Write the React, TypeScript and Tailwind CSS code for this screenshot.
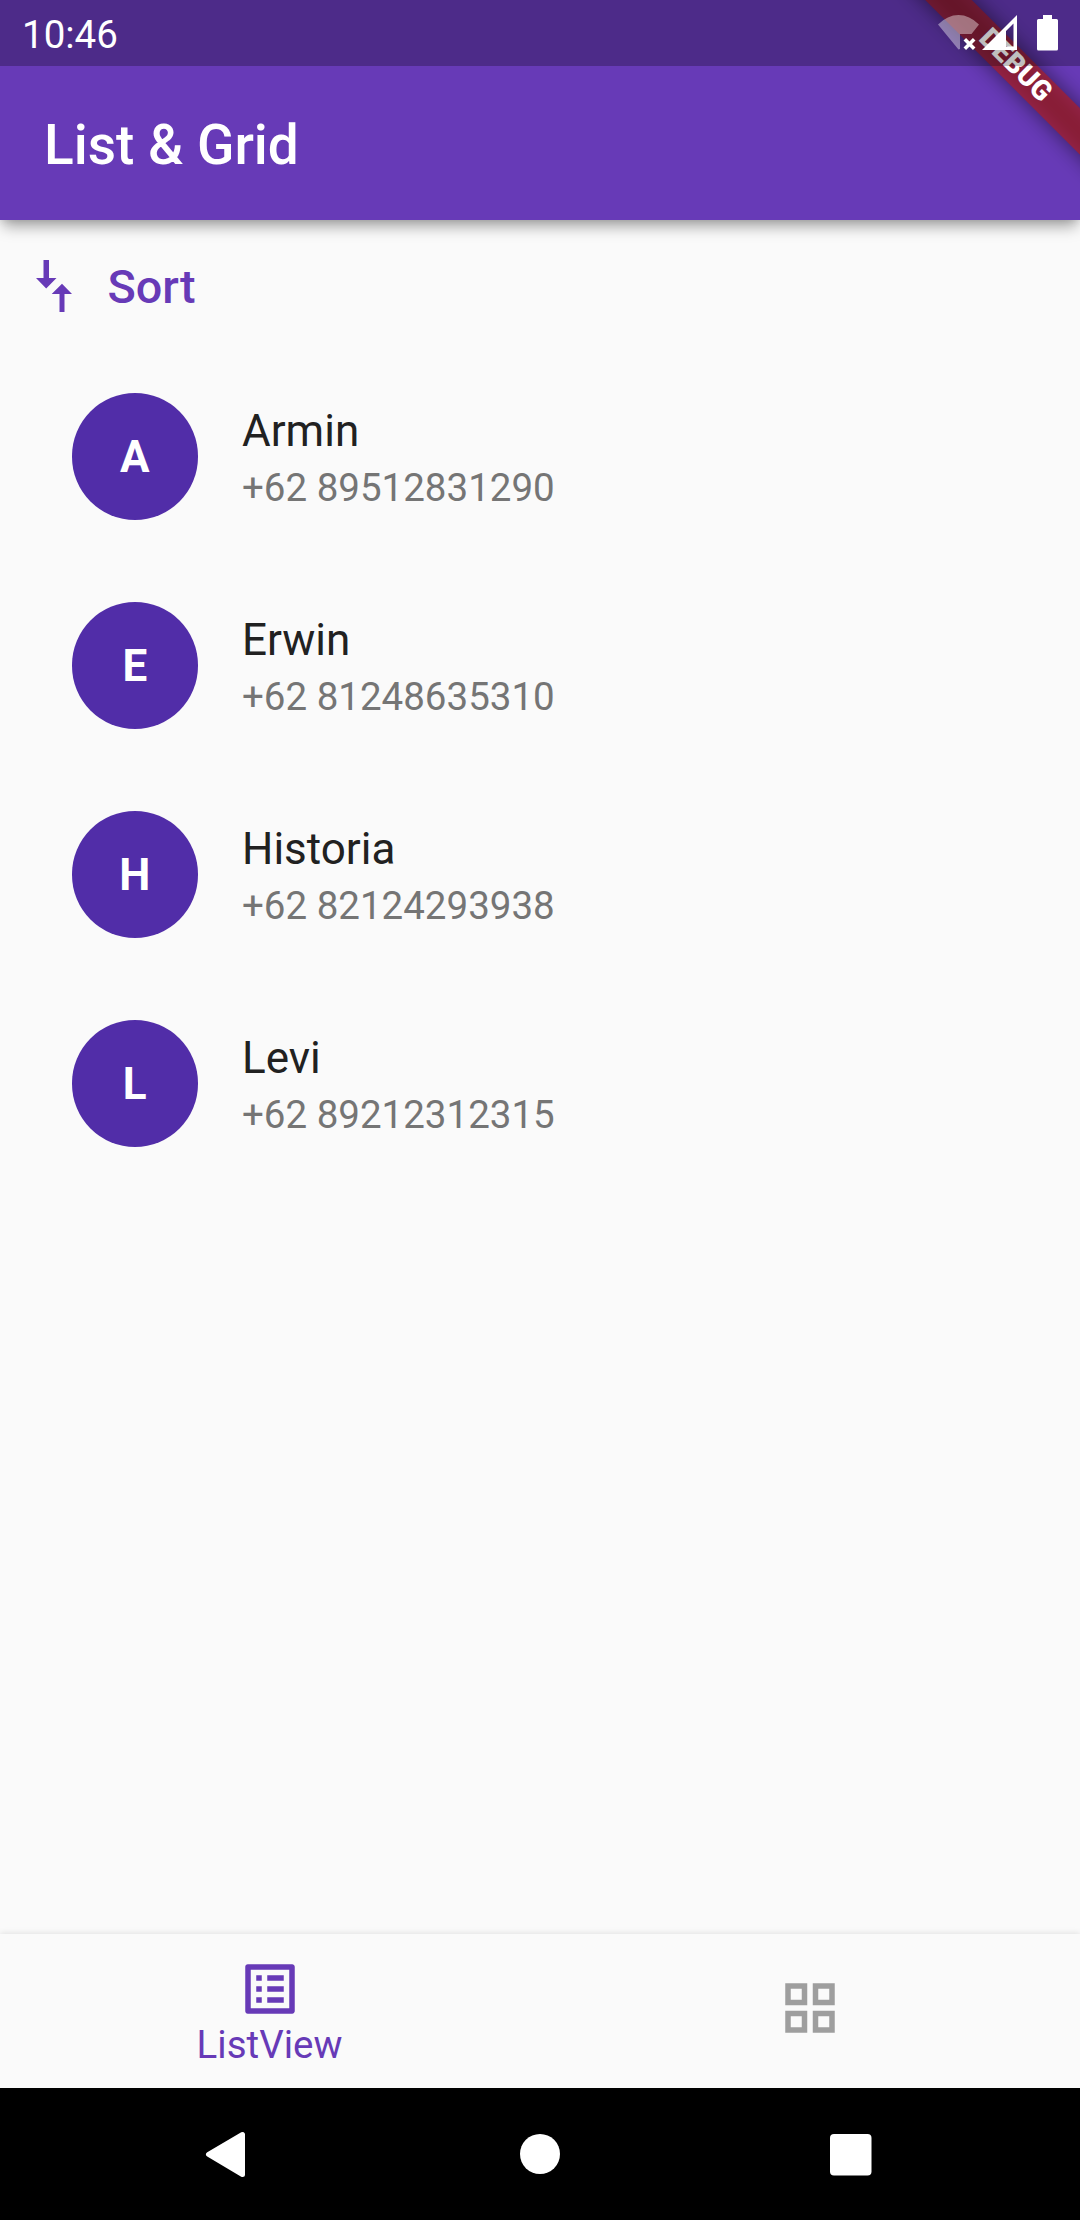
const contacts = [
  { name: "Armin", phone: "+62 89512831290" },
  { name: "Erwin", phone: "+62 81248635310" },
  { name: "Historia", phone: "+62 82124293938" },
  { name: "Levi", phone: "+62 89212312315" },
];

function DebugBanner() {
  return (
    <div className="pointer-events-none absolute top-0 right-0 h-[220px] w-[260px] overflow-hidden">
      <div className="absolute top-[49.25px] left-[44.25px] h-[33px] w-[300px] rotate-45 bg-black/50 blur-[10.5px]" />
      <div className="absolute top-[49.25px] left-[44.25px] flex h-[33px] w-[300px] rotate-45 items-center justify-center bg-[#b71c1c]/63 pb-[3px] pl-[2px] text-[28px] leading-[28px] font-black text-white">
        DEBUG
      </div>
    </div>
  );
}

function StatusIcons() {
  return (
    <svg className="h-[66px] w-[150px]" viewBox="930 0 150 66" fill="#fff">
      <path d="M938 24.5Q947.500 15 958.500 15Q969.500 15 979 24.500L971.500 34H960V49L958.500 49.500Z" fillOpacity=".4" />
      <path d="M964.800 39.300L974.200 48.700M974.200 39.300L964.800 48.700" stroke="#fff" strokeWidth="3.600" />
      <path fillRule="evenodd" d="M982 50L1017 15V50ZM1006 31V46.500H1013.500V23.500Z" />
      <path d="M1043 15H1052V19H1056.500Q1058 19 1058 20.500V49Q1058 50.500 1056.500 50.500H1038.500Q1037 50.500 1037 49V20.500Q1037 19 1038.500 19H1043Z" />
    </svg>
  );
}

function SortIcon() {
  return (
    <svg className="h-[52px] w-[36px]" viewBox="0 0 36 52" fill="#673ab7">
      <path d="M7.500 0H13V18H20.500L10.200 28.500L0 18H7.500Z" />
      <path d="M23.500 52H28.500V34H36L26 23.700L15.700 34H23.500Z" />
    </svg>
  );
}

export default function App() {
  return (
    <div className="flex h-[2220px] w-[1080px] flex-col overflow-hidden bg-[#fafafa] font-['Roboto',sans-serif]">
      <header className="relative z-10 h-[220px] shrink-0 bg-[#673ab7] shadow-[0_9px_14px_-3px_rgba(0,0,0,0.36),0_0_8px_rgba(0,0,0,0.1)]">
        <DebugBanner />
        <div className="relative flex h-[66px] justify-between bg-black/25 pl-[22px]">
          <span className="pt-[12px] text-[38.5px] leading-[46px] text-white">10:46</span>
          <StatusIcons />
        </div>
        <h1 className="pt-[47px] pl-[44px] text-[55px] leading-[64px] font-medium text-white">List &amp; Grid</h1>
      </header>

      <main className="flex-1">
        <button className="flex h-[132px] items-center pl-[35.5px] text-[#673ab7]">
          <SortIcon />
          <span className="pt-[2px] pl-[36px] text-[46.75px] leading-[54px] font-medium">Sort</span>
        </button>
        <ul>
          {contacts.map((c) => (
            <li key={c.name} className="flex h-[209px] items-center pl-[71.500px]">
              <div className="flex h-[126.5px] w-[126.5px] items-center justify-center rounded-full bg-[#512da8] pt-px text-[44px] leading-[52px] font-bold text-white">
                {c.name[0]}
              </div>
              <div className="pt-[3px] pl-[44px]">
                <p className="text-[44px] leading-[52px] text-[#212121]">{c.name}</p>
                <p className="pt-[8px] text-[38.5px] leading-[46px] text-[#757575]">{c.phone}</p>
              </div>
            </li>
          ))}
        </ul>
      </main>

      <nav className="grid h-[154px] shrink-0 grid-cols-2 bg-[#fafafa] shadow-[0_-1px_6px_rgba(0,0,0,0.1)]">
        <div className="flex flex-col items-center pt-[22px] text-[#673ab7]">
          <svg className="h-[66px] w-[66px]" viewBox="0 0 24 24" fill="currentColor">
            <path d="M19 5v14H5V5h14m1.100-2H3.900c-.5 0-.9.400-.9.900v16.200c0 .4.400.900.900.900h16.200c.4 0 .9-.5.9-.9V3.900c0-.5-.5-.9-.9-.9zM11 7h6v2h-6V7zm0 4h6v2h-6v-2zm0 4h6v2h-6zM7 7h2v2H7zm0 4h2v2H7zm0 4h2v2H7z" />
          </svg>
          <span className="pt-px pr-px text-[38.5px] leading-[44px]">ListView</span>
        </div>
        <div className="flex flex-col items-center pt-[41px]">
          <svg className="h-[66px] w-[66px]" viewBox="0 0 24 24" fill="none" stroke="#9e9e9e" strokeWidth="2">
            <path d="M4 4h6v6H4zM14 4h6v6h-6zM4 14h6v6H4zM14 14h6v6h-6z" />
          </svg>
        </div>
      </nav>

      <div className="z-10 h-[132px] shrink-0 bg-black">
        <svg className="h-[132px] w-[1080px]" viewBox="0 2088 1080 132" fill="#fff">
          <path d="M208.500 2154.300L242.500 2134.500V2174.500Z" stroke="#fff" strokeWidth="5" strokeLinejoin="round" />
          <circle cx="540" cy="2154" r="20" />
          <rect x="830" y="2134" width="41.500" height="41.500" rx="4" />
        </svg>
      </div>
    </div>
  );
}
